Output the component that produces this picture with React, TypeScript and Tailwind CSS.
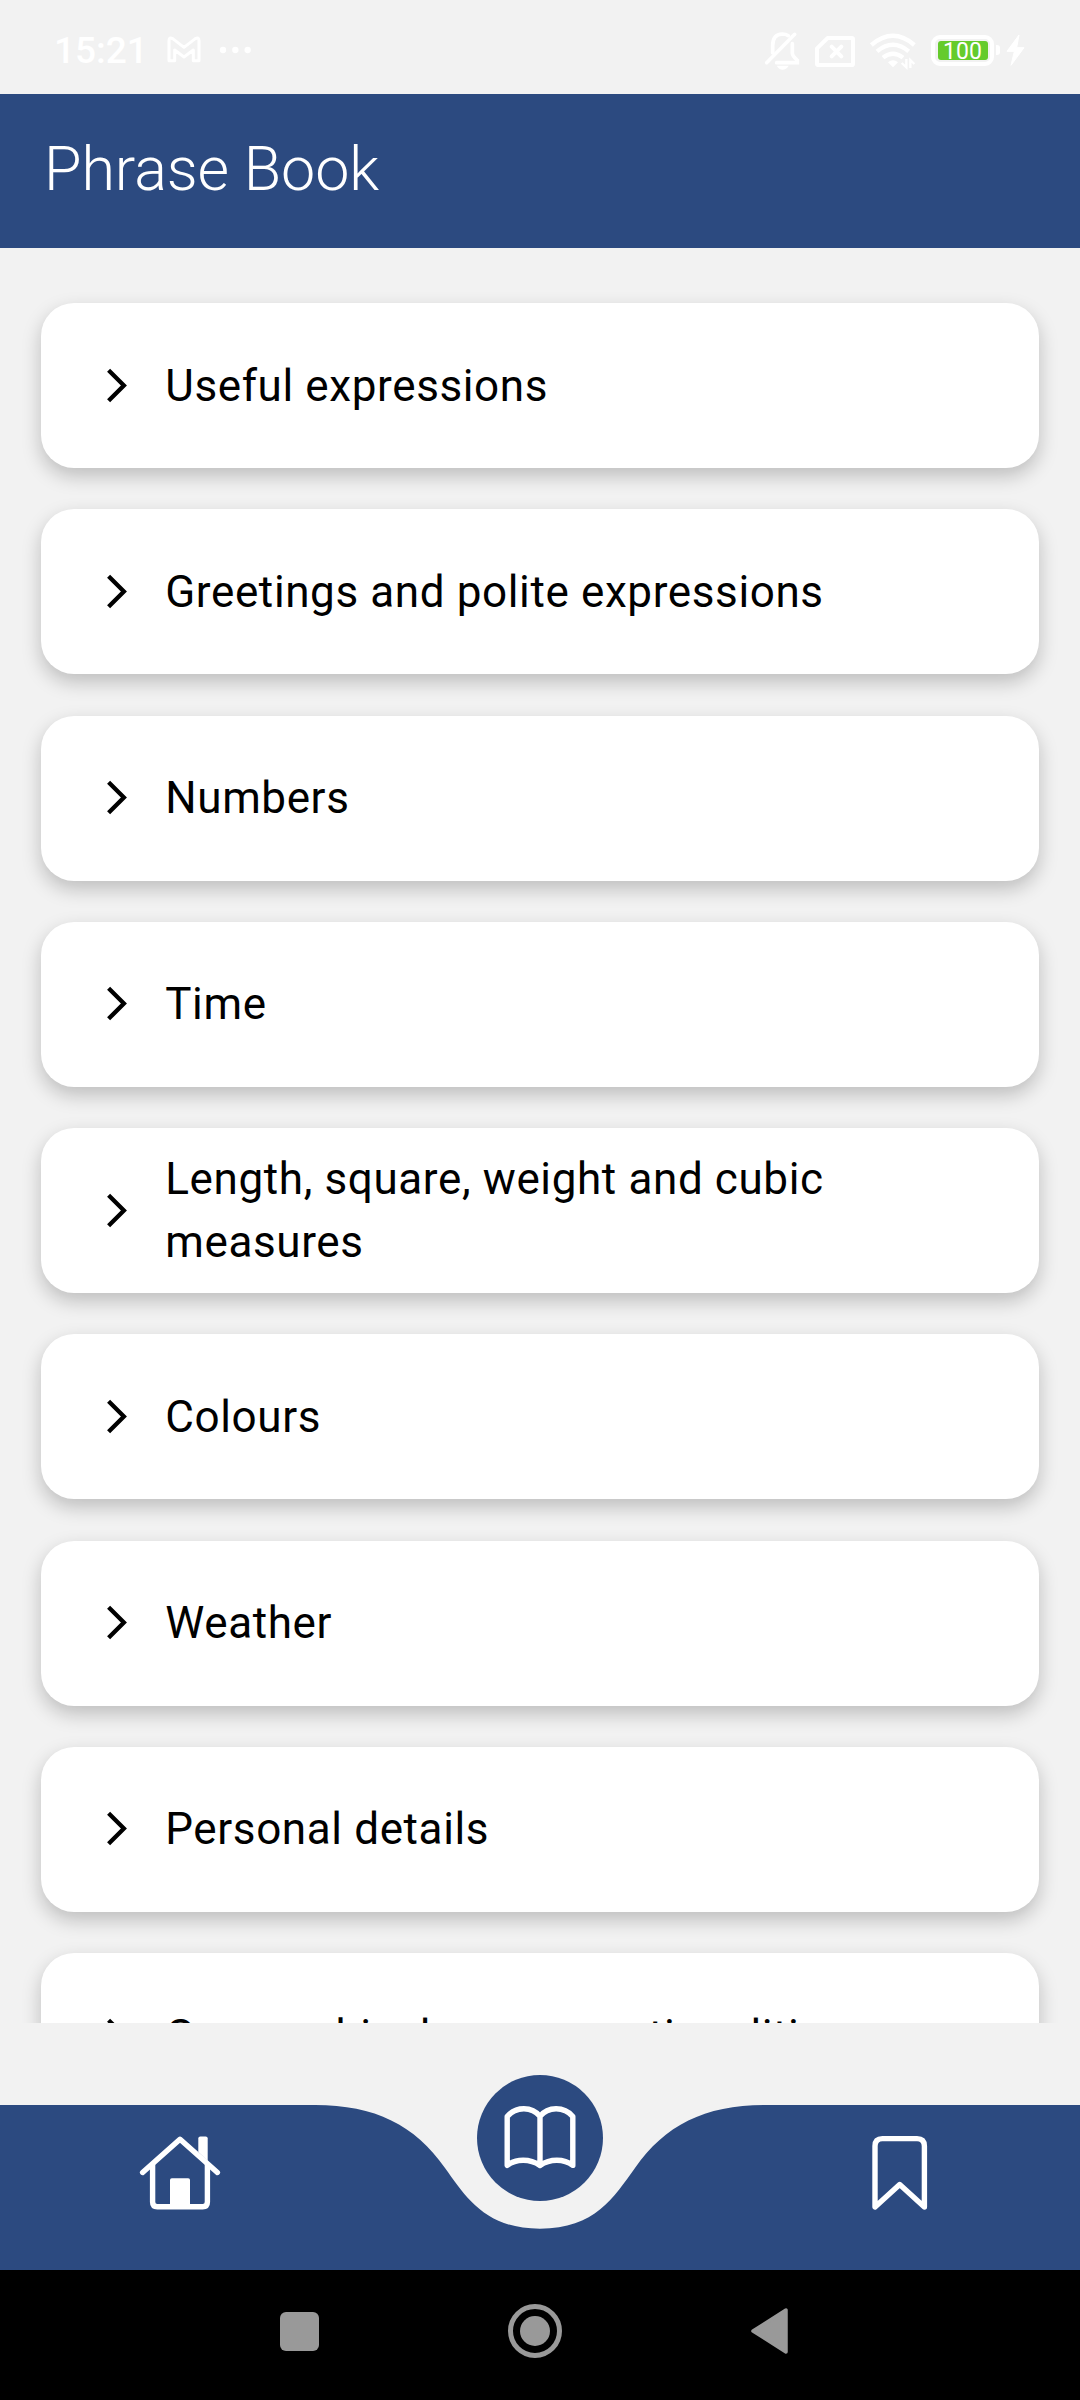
const topics = [
  "Useful expressions",
  "Greetings and polite expressions",
  "Numbers",
  "Time",
  "Length, square, weight and cubic measures",
  "Colours",
  "Weather",
  "Personal details",
  "Geographical names, nationalities",
];

const StatusBar = () => (
  <div className="flex h-[94px] w-full shrink-0 items-center justify-between pl-[54px] pr-[50px] text-white">
    <div className="flex items-center">
      <span className="w-[105px] pt-[8px] text-[37px] leading-[44px] font-medium">
        15:21
      </span>
      <svg className="h-[94px] w-[50px]" viewBox="477 0 150 282" fill="none">
        <path
          d="M507 182V122Q507 110 518 116L552 142L586 116Q597 110 597 122V182H580V150L552 171L524 150V182Z"
          stroke="currentColor"
          strokeWidth="9"
          strokeLinejoin="round"
        />
      </svg>
      <svg className="h-[94px] w-[50px]" viewBox="627 0 150 282">
        <g fill="currentColor">
          <circle cx="669" cy="150" r="9.5" />
          <circle cx="706" cy="150" r="9.5" />
          <circle cx="743" cy="150" r="9.5" />
        </g>
      </svg>
    </div>
    <div className="flex items-center">
      {/* muted bell */}
      <svg className="h-[94px] w-[50px]" viewBox="60 0 150 282" fill="none">
        <g stroke="currentColor" strokeWidth="11" strokeLinecap="round">
          <path d="M80 188L164 103" />
          <path d="M98 158V137Q98 103 127 102Q138 102 145 107" />
          <path d="M157 131V160Q157 168 172 181V188H110" />
        </g>
        <path d="M110 197H146Q139 209 128 209Q117 209 110 197Z" fill="currentColor" />
      </svg>
      {/* no sim */}
      <svg className="h-[94px] w-[56px]" viewBox="210 0 168 282" fill="none">
        <g stroke="currentColor" strokeWidth="12" strokeLinejoin="round">
          <path d="M263 114H335Q339 114 339 118V191Q339 195 335 195H236Q231 195 231 191V145Z" />
          <path d="M275 140L304 169M304 140L275 169" strokeLinecap="round" />
        </g>
      </svg>
      {/* wifi */}
      <svg className="h-[94px] w-[60px]" viewBox="378 0 180 282" fill="none">
        <g stroke="currentColor" strokeWidth="13">
          <path d="M394 135Q459 80 523 135" />
          <path d="M411 154Q459 115 506 154" />
          <path d="M429 173Q459 149 489 173" />
        </g>
        <path d="M444 187Q459 174 474 187L459 202Z" fill="currentColor" />
        <g stroke="currentColor" strokeWidth="7">
          <path d="M499 177V202L485 189M511 204V180L523 192" />
        </g>
      </svg>
      {/* battery */}
      <div className="mt-[6px] flex items-center">
        <div className="ml-[5px] flex h-[31px] w-[63px] items-center justify-center rounded-[9px] border-[4px] border-white">
          <div className="flex h-[19px] w-[50px] items-center justify-center rounded-[3px] bg-[#65cb2c] text-[23px] leading-[19px]">
            <span className="pt-[3px]">100</span>
          </div>
        </div>
        <div className="ml-[2px] h-[10px] w-[4px] rounded-r-[3px] bg-white" />
      </div>
      <svg className="h-[94px] w-[30px]" viewBox="782 0 90 282">
        <path
          d="M839 105L803 154H825L815 196L854 143H832Z"
          fill="currentColor"
          stroke="currentColor"
          strokeWidth="3"
        />
      </svg>
    </div>
  </div>
);

const TopicCard = ({ title }: { title: string }) => (
  <div className="flex h-[165px] shrink-0 items-center rounded-[33px] bg-white pr-[41px] pl-[64px] shadow-[0_8px_19px_rgba(0,0,0,0.22)]">
    <svg className="h-[36px] w-[24px] shrink-0" viewBox="0 0 24 36" fill="none">
      <path d="M3.6 2.2L18.9 17.5L3.6 32.8" stroke="black" strokeWidth="4.3" />
    </svg>
    <p className="ml-[36px] pt-[1px] text-[44px] leading-[63px] tracking-[0.62px] text-black">
      {title}
    </p>
  </div>
);

const TabBar = () => (
  <div className="relative h-[165px] w-full shrink-0">
    <svg className="block h-[165px] w-full" viewBox="0 0 1080 165" fill="none">
      <path
        d="M0 0H315C375 0 415 20 445 63C466 92 485 123.7 540 123.7C595 123.7 614 92 635 63C665 20 705 0 765 0H1080V165H0Z"
        fill="#2c4a80"
      />
      {/* home */}
      <g stroke="white" strokeLinecap="round" strokeLinejoin="round">
        <path d="M142.6 67.5L180 34.2L217.4 67.5" strokeWidth="5.4" />
        <path d="M152.6 60V97Q152.6 101.7 157.3 101.7H202.7Q207.4 101.7 207.4 97V60" strokeWidth="5.4" />
      </g>
      <path d="M198.3 47V33.5Q198.3 31.5 200.3 31.5H205.7Q207.7 31.5 207.7 33.5V56Z" fill="white" />
      <path d="M170 102V75Q170 73.2 171.8 73.2H188.2Q190 73.2 190 75V102Z" fill="white" />
      {/* bookmark */}
      <path
        d="M875 41Q875 33.6 882.4 33.6H917Q924.4 33.6 924.4 41V102L899.7 79.6L875 102Z"
        stroke="white"
        strokeWidth="5.4"
        strokeLinejoin="round"
      />
    </svg>
    <button className="absolute top-[-30.5px] left-[476.75px] flex size-[126.5px] items-center justify-center rounded-full bg-[#2c4a80]">
      <svg className="size-[88px]" viewBox="0 0 88 88" fill="none">
        <path
          d="M11.2 22.4C20 12.2 36 12.2 44 22.4C52 12.2 68 12.2 76.8 22.4V71.4C68 64.6 54 64.6 44 71.4C34 64.6 20 64.6 11.2 71.4ZM44 22.4V71.4"
          stroke="white"
          strokeWidth="5.4"
          strokeLinecap="round"
          strokeLinejoin="round"
        />
      </svg>
    </button>
  </div>
);

const SystemNav = () => (
  <div className="flex h-[130px] w-full shrink-0 items-center bg-black pb-[8px] pl-[280px]">
    <div className="size-[39px] rounded-[6px] bg-[#999999]" />
    <div className="ml-[189px] flex size-[54px] items-center justify-center rounded-full border-[5px] border-[#999999]">
      <div className="size-[30px] rounded-full bg-[#999999]" />
    </div>
    <svg className="ml-[189px] h-[46px] w-[38px]" viewBox="0 0 38 46">
      <path
        d="M2 23L35 2V44Z"
        fill="#999999"
        stroke="#999999"
        strokeWidth="3.5"
        strokeLinejoin="round"
      />
    </svg>
  </div>
);

const App = () => {
  return (
    <div className="flex h-[2400px] w-[1080px] flex-col overflow-hidden bg-[#f2f2f2] font-[Roboto,sans-serif]">
      <StatusBar />
      <header className="flex h-[154px] shrink-0 items-center bg-[#2c4a80] pb-[4px] pl-[44px]">
        <h1 className="text-[61px] leading-[72px] font-light tracking-[-0.1px] text-white">
          Phrase Book
        </h1>
      </header>
      <main className="flex h-[1775px] shrink-0 flex-col gap-[41.25px] overflow-hidden px-[41.25px] pt-[55px]">
        {topics.map((topic) => (
          <TopicCard key={topic} title={topic} />
        ))}
      </main>
      <div className="h-[82px] shrink-0" />
      <TabBar />
      <SystemNav />
    </div>
  );
};

export default App;
